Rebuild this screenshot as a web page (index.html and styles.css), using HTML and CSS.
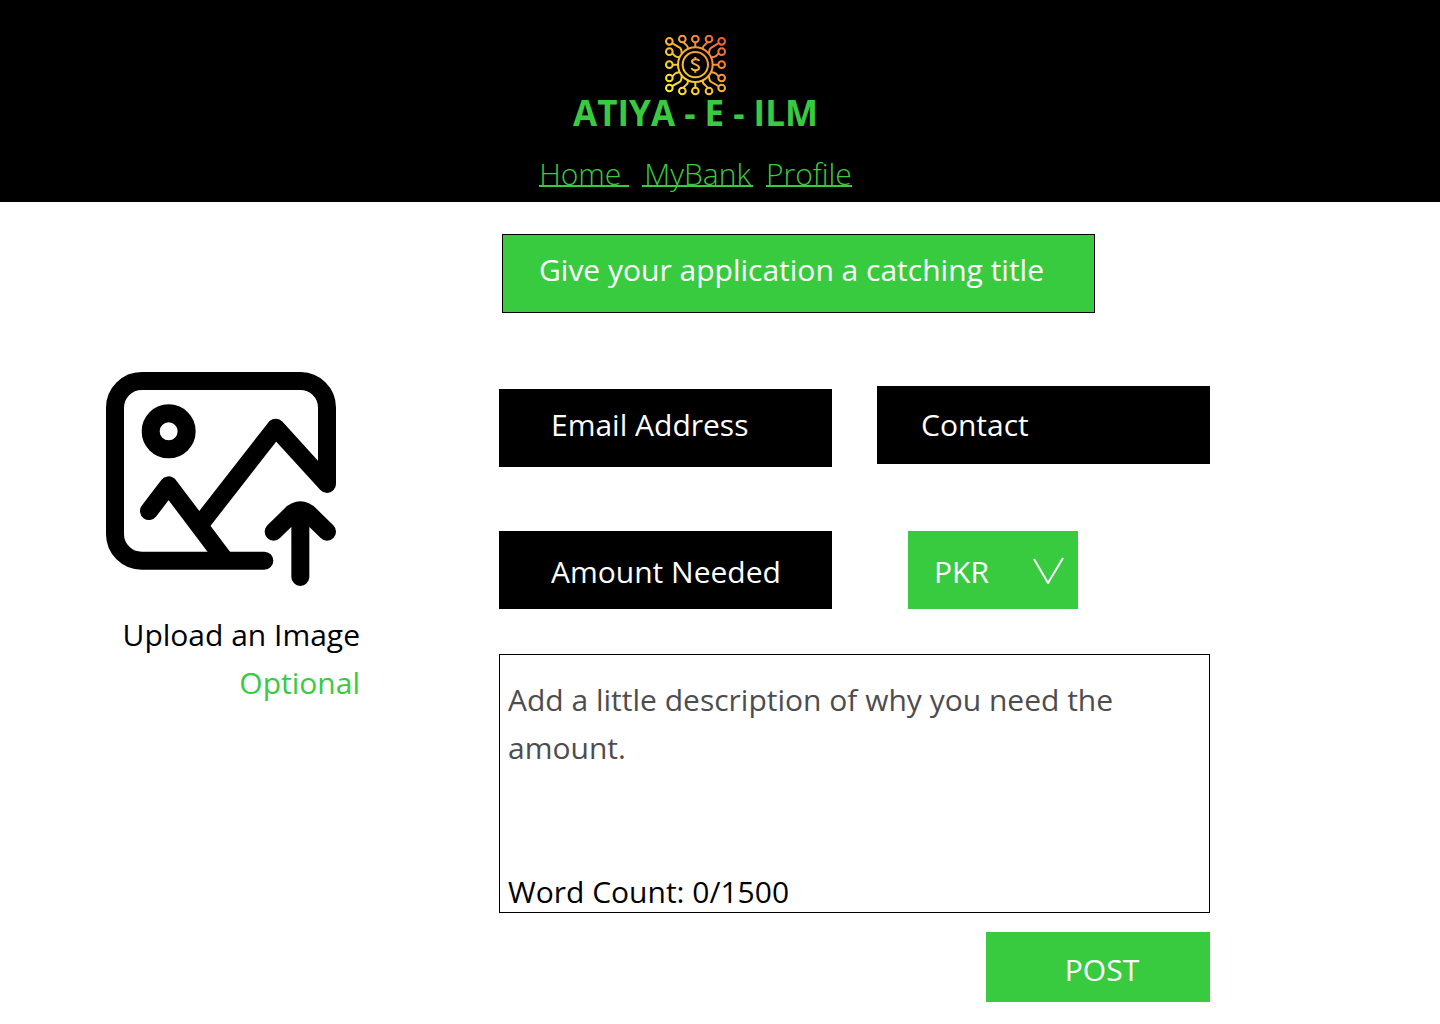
FILE: index.html
```html
<!DOCTYPE html>
<html lang="en">
<head>
<meta charset="utf-8">
<meta name="viewport" content="width=device-width, initial-scale=1">
<title>Atiya - E - Ilm</title>
<link rel="stylesheet" href="styles.css">
</head>
<body>
<header class="site-header">
  <svg class="logo" viewBox="30 30 183 183" fill="none" stroke="url(#gold)" stroke-width="6" aria-hidden="true">
    <defs>
      <linearGradient id="gold" gradientUnits="userSpaceOnUse" x1="40" y1="200" x2="205" y2="40">
        <stop offset="0" stop-color="#fdf02f"/>
        <stop offset="0.5" stop-color="#f9b233"/>
        <stop offset="1" stop-color="#ee5a3a"/>
      </linearGradient>
    </defs>
    <circle cx="121" cy="119" r="52"/>
    <circle cx="121" cy="119" r="38"/>
    <path d="M132 108C131 101 111 101 111 110C111 119 132 117 132 128C132 138 111 138 110 129M121 96V103M121 135V143"/>
    <circle cx="43" cy="49" r="10"/><circle cx="82" cy="42" r="10"/><circle cx="121" cy="42" r="10"/><circle cx="162" cy="42" r="10"/><circle cx="200" cy="49" r="10"/>
    <circle cx="43" cy="80" r="10"/><circle cx="200" cy="80" r="10"/>
    <circle cx="43" cy="119" r="10"/><circle cx="200" cy="119" r="10"/>
    <circle cx="43" cy="159" r="10"/><circle cx="200" cy="159" r="10"/>
    <circle cx="43" cy="189" r="10"/><circle cx="82" cy="198" r="10"/><circle cx="121" cy="198" r="10"/><circle cx="162" cy="198" r="10"/><circle cx="200" cy="189" r="10"/>
    <path d="M121 52V67M121 171V188M53 119H69M173 119H190
      M52 55L74 68Q80 72 80 86M190 55L169 68Q162 72 162 86M52 183L74 171Q80 167 80 152M190 183L169 171Q162 167 162 152
      M52 85L60 93Q63 96 74 97M191 85L183 93Q180 96 169 97M52 154L60 146Q63 143 74 142M191 154L183 146Q180 143 169 142
      M85 52L94 60Q99 64 99 72M158 52L149 60Q143 64 143 72M85 188L94 179Q99 175 99 167M158 188L149 179Q143 175 143 167"/>
  </svg>
  <h1 class="brand">ATIYA - E - ILM</h1>
  <nav class="nav" aria-label="Main">
    <a class="nav-link nav-link-home" href="#home">Home</a>
    <a class="nav-link nav-link-bank" href="#bank">MyBank</a>
    <a class="nav-link" href="#profile">Profile</a>
  </nav>
</header>

<main class="page">
  <div class="upload">
    <label class="upload-label" for="image">
      <svg class="upload-icon" viewBox="33 36 690 642" fill="none" stroke="#000" stroke-width="54" stroke-linecap="round" stroke-linejoin="round" aria-hidden="true">
        <path d="M508 602H140A80 80 0 0 1 60 522V143A80 80 0 0 1 140 63H615A80 80 0 0 1 696 143V372L542 203L322 485"/>
        <path d="M162 453L221 376L384 592"/>
        <circle cx="221" cy="214" r="54"/>
        <path d="M616 651V460M536 515L586 466Q616 436 646 466L696 515"/>
      </svg>
      <span class="upload-text">Upload an Image</span>
    </label>
    <input class="visually-hidden" id="image" type="file" accept="image/*">
    <span class="optional">Optional</span>
  </div>

  <form class="form" action="#" method="post">
    <input class="title-input" type="text" aria-label="Application title" placeholder="Give your application a catching title">
    <div class="fields">
      <div class="field-column">
        <input class="field field-email" type="email" aria-label="Email Address" placeholder="Email Address">
        <input class="field" type="text" inputmode="decimal" aria-label="Amount Needed" placeholder="Amount Needed">
      </div>
      <div class="field-column field-column-end">
        <input class="field field-contact" type="tel" aria-label="Contact" placeholder="Contact">
        <div class="currency">
          <select class="currency-select" aria-label="Currency">
            <option>PKR</option>
            <option>USD</option>
          </select>
          <svg class="chevron" viewBox="0 0 32 28" fill="none" stroke="#fff" stroke-width="2" aria-hidden="true"><path d="M1 3L15 27L30 2"/></svg>
        </div>
      </div>
    </div>
    <div class="description">
      <textarea class="description-input" aria-label="Description" placeholder="Add a little description of why you need the amount."></textarea>
      <div class="word-count">Word Count: 0/1500</div>
    </div>
    <button class="post" type="submit">POST</button>
  </form>
</main>
</body>
</html>
```

FILE: styles.css
```css
* {
  box-sizing: border-box;
}

body {
  margin: 0;
  background: #fff;
  color: #000;
  font: 400 30px/48px "Open Sans", "Noto Sans", sans-serif;
}

input,
select,
textarea,
button {
  margin: 0;
  border: 0;
  border-radius: 0;
  font: inherit;
  color: #fff;
}

.visually-hidden {
  position: absolute;
  width: 1px;
  height: 1px;
  overflow: hidden;
  opacity: 0;
}

.site-header {
  display: flex;
  flex-direction: column;
  align-items: center;
  padding: 35px 49px 15px 0;
  background: #000;
  color: #39cb3f;
}

.logo {
  display: block;
  width: 61px;
  height: 61px;
}

.brand {
  margin: 0;
  font-size: 35px;
  line-height: 34px;
  font-weight: 700;
}

.nav {
  display: flex;
  gap: 13px;
  margin-top: 33px;
}

.nav-link {
  height: 24px;
  border-bottom: 2px solid #39cb3f;
  color: #39cb3f;
  font-weight: 300;
  line-height: 22px;
  text-decoration: none;
}

.nav-link-home {
  padding-right: 8px;
}

.nav-link-bank {
  padding: 0 2px;
}

.page {
  display: grid;
  grid-template-columns: 254px minmax(0, 1fr);
  column-gap: 139px;
  padding: 32px 230px 22px 106px;
}

.upload {
  display: flex;
  flex-direction: column;
  padding-top: 138px;
  text-align: right;
}

.upload-label {
  display: flex;
  flex-direction: column;
  gap: 25px;
  cursor: pointer;
}

.upload-icon {
  width: 230px;
  height: 214px;
}

.upload-text {
  white-space: nowrap;
}

.optional {
  color: #39cb3f;
}

.form {
  display: flex;
  flex-direction: column;
}

.title-input {
  width: calc(100% - 118px);
  height: 79px;
  margin-left: 3px;
  padding: 0 36px 8px;
  border: 1px solid #000;
  background: #39cb3f;
}

::placeholder {
  color: #fff;
  opacity: 1;
}

.fields {
  display: grid;
  grid-template-columns: 1fr 1fr;
  column-gap: 45px;
  align-items: end;
  margin-top: 73px;
}

.field-column {
  display: flex;
  flex-direction: column;
  gap: 64px;
}

.field-column-end {
  gap: 67px;
}

.field {
  width: 100%;
  height: 78px;
  padding: 2px 44px 0 52px;
  background: #000;
}

.field-email {
  padding-top: 0;
  padding-bottom: 8px;
}

.field-contact {
  padding-top: 0;
  padding-bottom: 2px;
  padding-left: 44px;
}

.currency {
  display: flex;
  align-items: center;
  width: 170px;
  margin-left: 31px;
  background: #39cb3f;
}

.currency-select {
  flex: 1;
  width: 100%;
  height: 78px;
  margin-right: -46px;
  padding: 3px 46px 0 26px;
  background: transparent;
  appearance: none;
}

.chevron {
  width: 32px;
  height: 28px;
  margin-right: 13px;
  pointer-events: none;
}

.description {
  margin-top: 45px;
  padding: 21px 8px 0;
  border: 1px solid #000;
}

.description-input {
  display: block;
  width: 100%;
  height: 195px;
  padding: 0;
  background: transparent;
  color: #000;
  resize: none;
}

.description-input::placeholder {
  color: #4d4d4d;
}

.word-count {
  line-height: 41px;
}

.post {
  align-self: flex-end;
  width: 224px;
  height: 70px;
  margin-top: 19px;
  padding: 6px 0 0 8px;
  background: #39cb3f;
}
```
